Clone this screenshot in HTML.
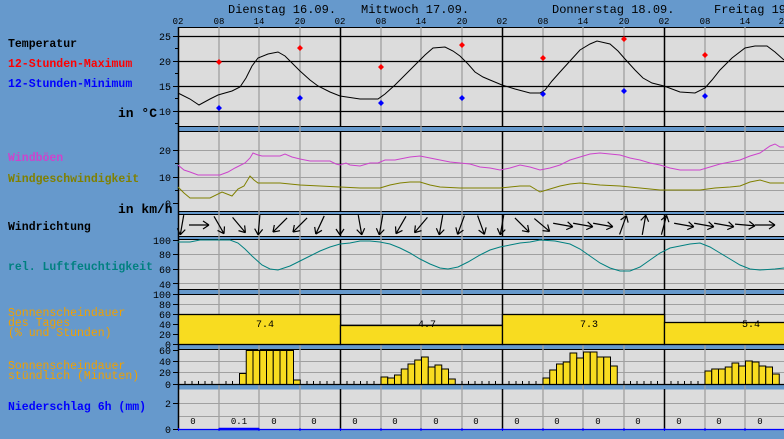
<!DOCTYPE html>
<html><head><meta charset="utf-8"><style>
html,body{margin:0;padding:0;background:#6699cc;}
svg{display:block;font-family:"Liberation Mono",monospace;}
</style></head><body>
<svg width="784" height="439" xmlns="http://www.w3.org/2000/svg">
<rect width="784" height="439" fill="#6699cc"/>
<!-- panels -->
<g fill="#dcdcdc" stroke="#000" stroke-width="1">
<rect x="178.5" y="27.5" width="620" height="99"/>
<rect x="178.5" y="131.5" width="620" height="80"/>
<rect x="178.5" y="214.5" width="620" height="22"/>
<rect x="178.5" y="239.5" width="620" height="50"/>
<rect x="178.5" y="294.5" width="620" height="50"/>
<rect x="178.5" y="349.5" width="620" height="35"/>
<rect x="178.5" y="389.5" width="620" height="40" stroke="none"/>
</g>
<!-- horizontal grey grid -->
<g stroke="#a0a0a0" stroke-width="1">
<path d="M178 163.5H784M178 190.5H784M178 177.5H784M178 150.5H784"/>
<path d="M178 254.5H784M178 269.5H784M178 283.5H784"/>
<path d="M178 304.5H784M178 314.5H784M178 324.5H784M178 334.5H784"/>
<path d="M178 361.5H784M178 372.5H784"/>
<path d="M178 403.5H784M178 416.5H784"/>
</g>
<!-- vertical grid -->
<g stroke="#a0a0a0" stroke-width="1.3">
<path d="M219 27V429M259 27V429M300 27V429M381 27V429M421 27V429M462 27V429M543 27V429M583 27V429M624 27V429M705 27V429M745 27V429"/>
</g>
<!-- temp black grid -->
<g stroke="#000" stroke-width="1.3">
<path d="M178 36.5H784M178 61.5H784M178 86.5H784M178 111.5H784"/>
</g>
<!-- day separators -->
<g stroke="#000" stroke-width="1.5">
<path d="M340.5 27V126M502.5 27V126M664.5 27V126M340.5 131V211M502.5 131V211M664.5 131V211M340.5 214V236M502.5 214V236M664.5 214V236M340.5 239V289M502.5 239V289M664.5 239V289M340.5 294V344M502.5 294V344M664.5 294V344M340.5 349V384M502.5 349V384M664.5 349V384M340.5 389V429M502.5 389V429M664.5 389V429"/>
<path d="M178.5 27V430"/>
</g>
<!-- left axis ticks -->
<g stroke="#000" stroke-width="1">
<path d="M173 36.5h5M175 48.5h3M173 61.5h5M175 73.5h3M173 86.5h5M175 98.5h3M173 111.5h5M175 123.5h3"/>
<path d="M173 150.5h5M175 163.5h3M173 177.5h5M175 190.5h3M173 203.5h5"/>
<path d="M173 240.5h5M173 254.5h5M173 269.5h5M173 283.5h5"/>
<path d="M173 294.5h5M173 304.5h5M173 314.5h5M173 324.5h5M173 334.5h5M173 344.5h5"/>
<path d="M173 350.5h5M173 361.5h5M173 372.5h5M173 384.5h5"/>
<path d="M173 403.5h5M173 429.5h5"/>
</g>
<!-- header -->
<g font-size="12" fill="#000">
<text x="228" y="13">Dienstag 16.09.</text>
<text x="361" y="13">Mittwoch 17.09.</text>
<text x="552" y="13">Donnerstag 18.09.</text>
<text x="714" y="13">Freitag 19.09.</text>
</g>
<g font-size="9" fill="#000" text-anchor="middle">
<text x="178" y="24">02</text><text x="219" y="24">08</text><text x="259" y="24">14</text><text x="300" y="24">20</text>
<text x="340" y="24">02</text><text x="381" y="24">08</text><text x="421" y="24">14</text><text x="462" y="24">20</text>
<text x="502" y="24">02</text><text x="543" y="24">08</text><text x="583" y="24">14</text><text x="624" y="24">20</text>
<text x="664" y="24">02</text><text x="705" y="24">08</text><text x="745" y="24">14</text><text x="784" y="24">20</text>
</g>
<!-- axis numbers -->
<g font-size="10" fill="#000" text-anchor="end">
<text x="171" y="40">25</text><text x="171" y="65">20</text><text x="171" y="90">15</text><text x="171" y="115">10</text>
<text x="171" y="154">20</text><text x="171" y="181">10</text><text x="171" y="207">0</text>
<text x="171" y="244">100</text><text x="171" y="258">80</text><text x="171" y="273">60</text><text x="171" y="288">40</text>
<text x="171" y="298">100</text><text x="171" y="308">80</text><text x="171" y="318">60</text><text x="171" y="328">40</text><text x="171" y="338">20</text><text x="171" y="348">0</text>
<text x="171" y="354">60</text><text x="171" y="365">40</text><text x="171" y="376">20</text><text x="171" y="388">0</text>
<text x="171" y="407">2</text><text x="171" y="433">0</text>
</g>
<!-- left labels -->
<g font-size="11.5" font-weight="bold">
<text x="8" y="47" fill="#000">Temperatur</text>
<text x="8" y="67" fill="#ff0000">12-Stunden-Maximum</text>
<text x="8" y="87" fill="#0000ff">12-Stunden-Minimum</text>
<text x="118" y="117" fill="#000" font-size="13">in °C</text>
<text x="8" y="161" fill="#cc44cc">Windböen</text>
<text x="8" y="182" fill="#808000">Windgeschwindigkeit</text>
<text x="118" y="213" fill="#000" font-size="13">in km/h</text>
<text x="8" y="230" fill="#000">Windrichtung</text>
<text x="8" y="270" fill="#008080">rel. Luftfeuchtigkeit</text>
<text x="8" y="410" fill="#0000ff">Niederschlag 6h (mm)</text>
</g>
<g font-size="11.5" fill="#f0a000">
<text x="8" y="316">Sonnenscheindauer</text>
<text x="8" y="326">des Tages</text>
<text x="8" y="336">(% und Stunden)</text>
<text x="8" y="369">Sonnenscheindauer</text>
<text x="8" y="379">stündlich (Minuten)</text>
</g>
<!-- temperature curve -->
<polyline fill="none" stroke="#000" stroke-width="1" points="178,93 190,99 199,105 210,99 218,95 232,91 240,87 246,78 252,66 258,58 268,54 278,52 285,56 292,63 300,71 310,80 318,86 330,92 340,96 360,99 378,99 385,94 395,85 405,75 415,65 425,55 433,48 445,47 453,51 460,56 468,64 475,72 483,77 490,80 502,85 515,89 530,93 540,93 545,90 552,81 560,72 570,61 580,50 590,44 597,41 610,44 618,51 625,59 635,70 643,78 652,83 664,86 680,92 695,93 705,88 712,80 720,70 732,58 745,48 755,46 767,46 775,52 784,60"/>
<!-- max/min points -->
<g fill="#ff0000">
<path d="M219 59l3 3-3 3-3-3z M300 45l3 3-3 3-3-3z M381 64l3 3-3 3-3-3z M462 42l3 3-3 3-3-3z M543 55l3 3-3 3-3-3z M624 36l3 3-3 3-3-3z M705 52l3 3-3 3-3-3z"/>
</g>
<g fill="#0000ff">
<path d="M219 105l3 3-3 3-3-3z M300 95l3 3-3 3-3-3z M381 100l3 3-3 3-3-3z M462 95l3 3-3 3-3-3z M543 91l3 3-3 3-3-3z M624 88l3 3-3 3-3-3z M705 93l3 3-3 3-3-3z"/>
</g>
<!-- wind -->
<polyline fill="none" stroke="#cc44cc" stroke-width="1" points="178,165 184,170 190,172 198,175 220,175 228,172 235,168 245,163 250,158 253,153 258,155 262,156 280,156 285,154 292,157 300,159 310,161 322,161 330,161 336,164 340,165 346,163 350,165 360,166 370,163 378,163 385,160 395,160 410,157 420,156 430,158 440,160 450,162 460,163 470,164 480,167 490,168 500,170 510,168 520,165 530,167 540,170 550,168 560,165 570,160 580,157 590,154 600,153 610,154 620,155 630,158 640,160 650,163 660,165 670,168 680,170 690,170 700,170 710,167 720,164 730,162 740,160 750,156 760,153 770,146 775,144 780,147 784,147"/>
<polyline fill="none" stroke="#808000" stroke-width="1" points="178,187 184,193 190,198 210,198 222,192 232,196 238,189 244,186 250,176 254,180 258,183 280,183 300,185 320,186 340,187 360,188 380,188 390,185 400,183 410,182 420,182 430,185 440,187 460,188 480,188 500,188 510,187 520,186 530,186 540,192 550,189 560,186 570,184 580,183 590,184 600,185 620,186 640,188 660,190 680,190 700,190 715,188 730,187 740,186 750,182 760,180 770,183 784,183"/>
<!-- wind direction arrows -->
<g stroke="#000" stroke-width="1.2" fill="none">
<path d="M-10,0H10M10,0l-6,-4M10,0l-6,4" transform="translate(182,225) rotate(100)"/>
<path d="M-10,0H10M10,0l-6,-4M10,0l-6,4" transform="translate(199,225) rotate(0)"/>
<path d="M-10,0H10M10,0l-6,-4M10,0l-6,4" transform="translate(219,225) rotate(60)"/>
<path d="M-10,0H10M10,0l-6,-4M10,0l-6,4" transform="translate(239,225) rotate(50)"/>
<path d="M-10,0H10M10,0l-6,-4M10,0l-6,4" transform="translate(259,225) rotate(95)"/>
<path d="M-10,0H10M10,0l-6,-4M10,0l-6,4" transform="translate(280,225) rotate(135)"/>
<path d="M-10,0H10M10,0l-6,-4M10,0l-6,4" transform="translate(300,225) rotate(135)"/>
<path d="M-10,0H10M10,0l-6,-4M10,0l-6,4" transform="translate(320,225) rotate(115)"/>
<path d="M-10,0H10M10,0l-6,-4M10,0l-6,4" transform="translate(340,225) rotate(90)"/>
<path d="M-10,0H10M10,0l-6,-4M10,0l-6,4" transform="translate(360,225) rotate(80)"/>
<path d="M-10,0H10M10,0l-6,-4M10,0l-6,4" transform="translate(381,225) rotate(100)"/>
<path d="M-10,0H10M10,0l-6,-4M10,0l-6,4" transform="translate(401,225) rotate(120)"/>
<path d="M-10,0H10M10,0l-6,-4M10,0l-6,4" transform="translate(421,225) rotate(130)"/>
<path d="M-10,0H10M10,0l-6,-4M10,0l-6,4" transform="translate(441,225) rotate(100)"/>
<path d="M-10,0H10M10,0l-6,-4M10,0l-6,4" transform="translate(461,225) rotate(110)"/>
<path d="M-10,0H10M10,0l-6,-4M10,0l-6,4" transform="translate(481,225) rotate(70)"/>
<path d="M-10,0H10M10,0l-6,-4M10,0l-6,4" transform="translate(502,225) rotate(100)"/>
<path d="M-10,0H10M10,0l-6,-4M10,0l-6,4" transform="translate(522,225) rotate(45)"/>
<path d="M-10,0H10M10,0l-6,-4M10,0l-6,4" transform="translate(542,225) rotate(40)"/>
<path d="M-10,0H10M10,0l-6,-4M10,0l-6,4" transform="translate(563,225) rotate(10)"/>
<path d="M-10,0H10M10,0l-6,-4M10,0l-6,4" transform="translate(583,225) rotate(10)"/>
<path d="M-10,0H10M10,0l-6,-4M10,0l-6,4" transform="translate(603,225) rotate(10)"/>
<path d="M-10,0H10M10,0l-6,-4M10,0l-6,4" transform="translate(623,225) rotate(-70)"/>
<path d="M-10,0H10M10,0l-6,-4M10,0l-6,4" transform="translate(644,225) rotate(-80)"/>
<path d="M-10,0H10M10,0l-6,-4M10,0l-6,4" transform="translate(664,225) rotate(-75)"/>
<path d="M-10,0H10M10,0l-6,-4M10,0l-6,4" transform="translate(684,225) rotate(10)"/>
<path d="M-10,0H10M10,0l-6,-4M10,0l-6,4" transform="translate(704,225) rotate(10)"/>
<path d="M-10,0H10M10,0l-6,-4M10,0l-6,4" transform="translate(724,225) rotate(10)"/>
<path d="M-10,0H10M10,0l-6,-4M10,0l-6,4" transform="translate(745,225) rotate(5)"/>
<path d="M-10,0H10M10,0l-6,-4M10,0l-6,4" transform="translate(765,225) rotate(0)"/>
</g>
<!-- humidity -->
<polyline fill="none" stroke="#008080" stroke-width="1" points="178,242 190,242 200,240 230,240 238,243 245,249 252,256 262,265 270,269 278,270 290,266 300,261 310,256 320,251 330,247 340,244 350,243 360,241 370,241 380,242 390,244 400,248 410,253 420,259 430,264 440,268 448,269 458,267 468,262 480,255 490,250 500,247 510,245 520,243 530,242 540,240 555,241 570,244 580,249 590,256 600,263 610,268 620,271 630,271 640,267 650,260 660,253 670,248 680,246 690,244 700,243 710,247 720,253 730,259 740,265 750,269 760,270 775,269 784,268"/>
<!-- daily sunshine -->
<g fill="#f8dc20" stroke="#000" stroke-width="1.3">
<rect x="178.5" y="314.5" width="162" height="30"/>
<rect x="340.5" y="325.5" width="162" height="19"/>
<rect x="502.5" y="314.5" width="162" height="30"/>
<rect x="664.5" y="322.5" width="130" height="22"/>
</g>
<g font-size="10" fill="#000" text-anchor="middle">
<text x="265" y="327">7.4</text><text x="427" y="327">4.7</text><text x="589" y="327">7.3</text><text x="751" y="327">5.4</text>
</g>
<!-- hourly sunshine -->
<g fill="#f8dc20" stroke="#000" stroke-width="1">
<rect x="239.5" y="373.5" width="6.75" height="11"/>
<rect x="246.25" y="350.5" width="6.75" height="34"/><rect x="253" y="350.5" width="6.75" height="34"/><rect x="259.75" y="350.5" width="6.75" height="34"/><rect x="266.5" y="350.5" width="6.75" height="34"/><rect x="273.25" y="350.5" width="6.75" height="34"/><rect x="280" y="350.5" width="6.75" height="34"/><rect x="286.75" y="350.5" width="6.75" height="34"/>
<rect x="293.5" y="380" width="6.75" height="4.5"/>
<rect x="381" y="377" width="6.75" height="7.5"/><rect x="387.75" y="378" width="6.75" height="6.5"/><rect x="394.5" y="375" width="6.75" height="9.5"/><rect x="401.25" y="369" width="6.75" height="15.5"/><rect x="408" y="364" width="6.75" height="20.5"/><rect x="414.75" y="360" width="6.75" height="24.5"/><rect x="421.5" y="357" width="6.75" height="27.5"/><rect x="428.25" y="367" width="6.75" height="17.5"/><rect x="435" y="365" width="6.75" height="19.5"/><rect x="441.75" y="369" width="6.75" height="15.5"/><rect x="448.5" y="379" width="6.75" height="5.5"/>
<rect x="543" y="378" width="6.75" height="6.5"/><rect x="549.75" y="370" width="6.75" height="14.5"/><rect x="556.5" y="364" width="6.75" height="20.5"/><rect x="563.25" y="362" width="6.75" height="22.5"/><rect x="570" y="353" width="6.75" height="31.5"/><rect x="576.75" y="358" width="6.75" height="26.5"/><rect x="583.5" y="352" width="6.75" height="32.5"/><rect x="590.25" y="352" width="6.75" height="32.5"/><rect x="597" y="357" width="6.75" height="27.5"/><rect x="603.75" y="357" width="6.75" height="27.5"/><rect x="610.5" y="366" width="6.75" height="18.5"/>
<rect x="705" y="371" width="6.75" height="13.5"/><rect x="711.75" y="369" width="6.75" height="15.5"/><rect x="718.5" y="369" width="6.75" height="15.5"/><rect x="725.25" y="367" width="6.75" height="17.5"/><rect x="732" y="363" width="6.75" height="21.5"/><rect x="738.75" y="366" width="6.75" height="18.5"/><rect x="745.5" y="361" width="6.75" height="23.5"/><rect x="752.25" y="362" width="6.75" height="22.5"/><rect x="759" y="366" width="6.75" height="18.5"/><rect x="765.75" y="367" width="6.75" height="17.5"/><rect x="772.5" y="374" width="6.75" height="10.5"/>
</g>
<path d="M178 384.5H784" stroke="#000" stroke-width="1.3"/>
<path d="M185 381v3M192 381v3M198.5 381v3M205 381v3M212 381v3M226 381v3M232.5 381v3M347 381v3M354 381v3M360.5 381v3M367 381v3M374 381v3M462 381v3M468.5 381v3M475 381v3M482 381v3M489 381v3M495.5 381v3M509 381v3M516 381v3M522.5 381v3M529 381v3M536 381v3M624 381v3M630.5 381v3M637 381v3M644 381v3M651 381v3M657.5 381v3M671 381v3M678 381v3M684.5 381v3M691 381v3M698 381v3M307 381v3M313.5 381v3M320 381v3M327 381v3M334 381v3M307 381v3" stroke="#000" stroke-width="1"/>
<!-- precipitation -->
<g font-size="9" fill="#000" text-anchor="middle">
<text x="193" y="424">0</text><text x="239" y="424">0.1</text><text x="274" y="424">0</text><text x="314" y="424">0</text>
<text x="355" y="424">0</text><text x="395" y="424">0</text><text x="436" y="424">0</text><text x="476" y="424">0</text>
<text x="517" y="424">0</text><text x="557" y="424">0</text><text x="598" y="424">0</text><text x="638" y="424">0</text>
<text x="679" y="424">0</text><text x="719" y="424">0</text><text x="760" y="424">0</text>
</g>
<path d="M178 429.5H784" stroke="#0000ff" stroke-width="1.3"/>
<path d="M219 429H259" stroke="#0000ff" stroke-width="2.5"/>
<path d="M178.5 428v3M219 428v3M259 428v3M300 428v3M340.5 428v3M381 428v3M421 428v3M462 428v3M502.5 428v3M543 428v3M583 428v3M624 428v3M664.5 428v3M705 428v3M745 428v3" stroke="#0000ff" stroke-width="1"/>
</svg>
</body></html>
